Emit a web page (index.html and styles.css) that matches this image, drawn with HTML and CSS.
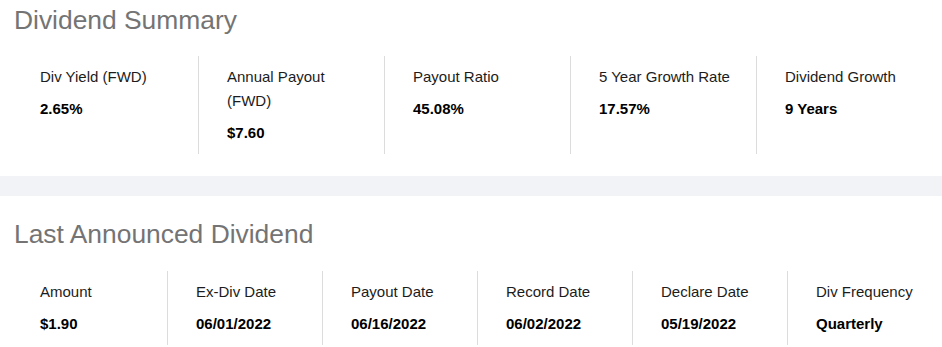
FILE: index.html
```html
<!DOCTYPE html>
<html>
<head>
<meta charset="utf-8">
<link rel="stylesheet" href="styles.css">
</head>
<body>
<section class="panel panel-first">
  <h2 class="title">Dividend Summary</h2>
  <div class="stats stats-5">
    <div class="stat"><div class="label">Div Yield (FWD)</div><div class="value">2.65%</div></div>
    <div class="stat"><div class="label">Annual Payout (FWD)</div><div class="value">$7.60</div></div>
    <div class="stat"><div class="label">Payout Ratio</div><div class="value">45.08%</div></div>
    <div class="stat"><div class="label">5 Year Growth Rate</div><div class="value">17.57%</div></div>
    <div class="stat"><div class="label">Dividend Growth</div><div class="value">9 Years</div></div>
  </div>
</section>
<div class="band"></div>
<section class="panel panel-second">
  <h2 class="title">Last Announced Dividend</h2>
  <div class="stats stats-6">
    <div class="stat"><div class="label">Amount</div><div class="value">$1.90</div></div>
    <div class="stat"><div class="label">Ex-Div Date</div><div class="value">06/01/2022</div></div>
    <div class="stat"><div class="label">Payout Date</div><div class="value">06/16/2022</div></div>
    <div class="stat"><div class="label">Record Date</div><div class="value">06/02/2022</div></div>
    <div class="stat"><div class="label">Declare Date</div><div class="value">05/19/2022</div></div>
    <div class="stat"><div class="label">Div Frequency</div><div class="value">Quarterly</div></div>
  </div>
</section>
</body>
</html>
```
FILE: styles.css
```css
html, body {
  margin: 0;
  padding: 0;
  background: #ffffff;
}
body {
  font-family: "Liberation Sans", Arial, sans-serif;
  color: #111;
}
.panel {
  padding: 23px 0 22px 12px;
}
.panel-first {
  padding-top: 5px;
}
.title {
  margin: 0 0 21px 0;
  padding-left: 2px;
  font-size: 26.4px;
  line-height: 30px;
  font-weight: 400;
  color: #747474;
}
.panel-second .title {
  margin-bottom: 22px;
}
.stats {
  display: grid;
}
.stats-5 {
  grid-template-columns: repeat(5, 1fr);
}
.stats-6 {
  grid-template-columns: repeat(6, 1fr);
}
.stat {
  padding: 9px 14px 9px 28px;
  border-left: 1px solid #dcdcdc;
}
.stat:first-child {
  border-left: none;
}
.label {
  font-size: 15px;
  line-height: 24px;
  color: #1c1c1c;
}
.value {
  margin-top: 8px;
  font-size: 15px;
  line-height: 24px;
  font-weight: 700;
  color: #000;
}
.band {
  height: 20px;
  background: #f2f3f6;
}
```
